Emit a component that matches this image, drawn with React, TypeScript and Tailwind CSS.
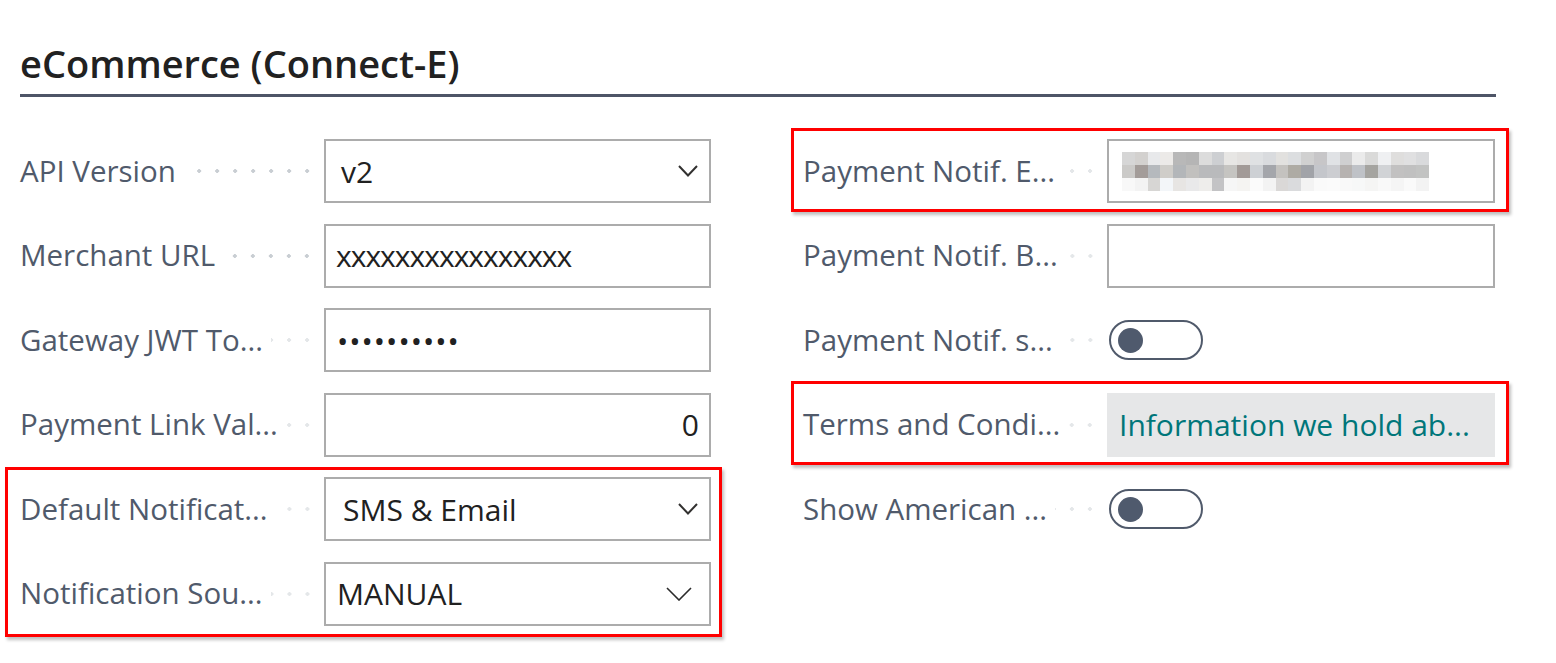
import type { ReactNode } from "react";

const FONT = "font-['Open_Sans','Noto_Sans',sans-serif]";

// pixelated (redacted) e-mail value, 3 rows of grey blocks
const PIXELS = [
  ["#d6d6d6", "#d3d1cf", "#e8e9eb", "#eceae8", "#b8b8b8", "#b5b5b5", "#dcdcdc", "#cdcfd2", "#e7e6e4", "#e3e1df", "#dfe1e3", "#d9dbde", "#e2e1df", "#dcdee0", "#d0d0d0", "#c7c6c8", "#e0e2e5", "#cfcfd0", "#ebebeb", "#dadad9", "#eff0f2", "#dfdedd", "#e0e0e1", "#d9dadc"],
  ["#cbcac8", "#a39c99", "#b5b9bd", "#cfcdc9", "#b3b6b9", "#c1c0be", "#b9babc", "#b9babc", "#c5c4c1", "#a29a97", "#cdd0d4", "#a4a6ab", "#c4c2bf", "#aeaba4", "#a1a3a8", "#c4c6cb", "#cccdd1", "#b6b2b0", "#bfc2c7", "#a5a4a0", "#d1d3d6", "#c2c1c1", "#c0c0c0", "#c2c3c2"],
  ["#f8f8f8", "#f3f3f3", "#d7d6d4", "#f3f6f9", "#e7e5e3", "#e9e9ea", "#eeedeb", "#c3c3c5", "#f6f6f6", "#f5f4f2", "#fbfbfb", "#f3f3f3", "#dad8d7", "#dadbdd", "#f3f3f3", "#fafafa", "#fbfbfb", "#f9f9f9", "#f7f8f8", "#f5f5f4", "#f9f9f9", "#f5f5f5", "#fafafa", "#f3f3f3"],
];

function Chevron({ big }: { big?: boolean }) {
  return big ? (
    <svg width="26" height="14" viewBox="0 0 26 14" fill="none" className="mr-[17px] shrink-0">
      <polyline points="1,1 13,13 25,1" stroke="#2b2b2b" strokeWidth="1.6" />
    </svg>
  ) : (
    <svg width="20" height="12" viewBox="0 0 20 12" fill="none" className="mr-[11px] shrink-0">
      <polyline points="1,1 10,10.5 19,1" stroke="#323130" strokeWidth="2" />
    </svg>
  );
}

function Field({ label, children }: { label: string; children: ReactNode }) {
  const cut = label.endsWith("...");
  return (
    <div className="flex h-[64px] items-center">
      <div className="flex w-[296px] shrink-0 items-center">
        <span className="whitespace-nowrap text-[29.5px] text-[#505a6b]">{label}</span>
        <div
          className={`ml-[8px] h-[4px] flex-1 bg-[radial-gradient(circle,#c9ced3_1.6px,transparent_2px)] bg-[length:18px_4px] bg-repeat-x bg-right ${
            cut ? "opacity-50" : ""
          }`}
        />
      </div>
      <div className="ml-[8px] flex-1 self-stretch">{children}</div>
    </div>
  );
}

function Box({ children, className = "" }: { children?: ReactNode; className?: string }) {
  return (
    <div className={`flex h-full items-center border-2 border-[#acacac] bg-white text-[30px] text-[#212121] ${className}`}>
      {children}
    </div>
  );
}

function Select({ value, pad = "pl-[15px]", big }: { value: string; pad?: string; big?: boolean }) {
  return (
    <Box>
      <span className={`flex-1 ${pad}`}>{value}</span>
      <Chevron big={big} />
    </Box>
  );
}

function Toggle() {
  return (
    <div className="flex h-full items-center pl-[2px]">
      <div className="flex h-[40px] w-[94px] items-center rounded-full border-2 border-[#505a6b] pl-[7px]">
        <div className="h-[25px] w-[25px] rounded-full bg-[#4f5a6d]" />
      </div>
    </div>
  );
}

function Highlight({ className, children }: { className: string; children: ReactNode }) {
  return (
    <div className="relative">
      {children}
      <div className={`pointer-events-none absolute border-[3px] border-[#ff0000] shadow-[2px_3px_3px_rgba(0,0,0,0.25)] ${className}`} />
    </div>
  );
}

export default function App() {
  return (
    <div className={`${FONT} h-[663px] w-[1556px] overflow-hidden bg-white pl-[20px] pt-[40px]`}>
      <h1 className="w-[1476px] border-b-[3px] border-[#4e5567] pb-[8px] text-[38px] font-semibold leading-[46px] text-[#212121]">
        eCommerce (Connect-E)
      </h1>

      <div className="mt-[42px] flex gap-[92px]">
        <div className="flex w-[691px] flex-col gap-[20.5px]">
          <Field label="API Version">
            <Select value="v2" />
          </Field>
          <Field label="Merchant URL">
            <Box className="pl-[10px] tracking-[-1px]">xxxxxxxxxxxxxxxx</Box>
          </Field>
          <Field label="Gateway JWT To...">
            <Box className="pl-[11px] tracking-[1px]">••••••••••</Box>
          </Field>
          <Field label="Payment Link Val...">
            <Box className="justify-end pr-[10px]">0</Box>
          </Field>
          <Highlight className="-top-[10px] -bottom-[11px] -left-[15px] -right-[11px]">
            <div className="flex flex-col gap-[20.5px]">
              <Field label="Default Notificat...">
                <Select value="SMS & Email" pad="pl-[17px]" />
              </Field>
              <Field label="Notification Sou...">
                <Select value="MANUAL" pad="pl-[11px]" big />
              </Field>
            </div>
          </Highlight>
        </div>

        <div className="flex w-[692px] flex-col gap-[20.5px]">
          <Highlight className="-top-[11px] -bottom-[9px] -left-[12px] -right-[14px]">
            <Field label="Payment Notif. E...">
              <Box className="pl-[13px]">
                <div className="flex flex-col">
                  {PIXELS.map((row, r) => (
                    <div key={r} className="flex">
                      {row.map((c, i) => (
                        <div key={i} className="h-[13px] w-[12.8px]" style={{ backgroundColor: c }} />
                      ))}
                    </div>
                  ))}
                </div>
              </Box>
            </Field>
          </Highlight>
          <Field label="Payment Notif. B...">
            <Box />
          </Field>
          <Field label="Payment Notif. s...">
            <Toggle />
          </Field>
          <Highlight className="-top-[12px] -bottom-[8px] -left-[12px] -right-[14px]">
            <Field label="Terms and Condi...">
              <div className="flex h-full items-center bg-[#e6e7e8] pl-[12px] text-[30px] text-[#00767a]">
                Information we hold ab...
              </div>
            </Field>
          </Highlight>
          <Field label="Show American ...">
            <Toggle />
          </Field>
        </div>
      </div>
    </div>
  );
}
